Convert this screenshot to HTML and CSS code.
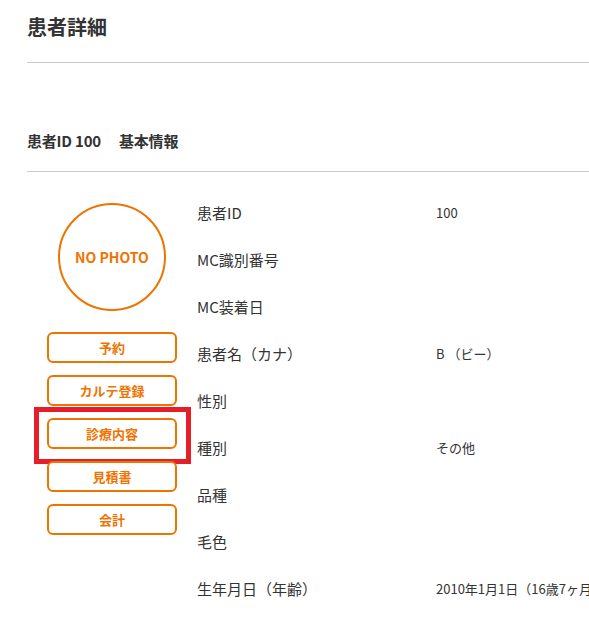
FILE: index.html
```html
<!DOCTYPE html>
<html lang="ja">
<head>
<meta charset="utf-8">
<title>患者詳細</title>
<link rel="stylesheet" href="styles.css">
</head>
<body>
<div class="page">
  <h1 class="title">患者詳細</h1>
  <h2 class="section-head"><span>患者ID 100</span><span>基本情報</span></h2>
  <div class="content">
    <div class="side">
      <div class="photo">NO PHOTO</div>
      <div class="actions">
        <button class="btn">予約</button>
        <button class="btn">カルテ登録</button>
        <button class="btn btn-marked">診療内容</button>
        <button class="btn">見積書</button>
        <button class="btn">会計</button>
      </div>
    </div>
    <dl class="info">
      <div class="row"><dt>患者ID</dt><dd>100</dd></div>
      <div class="row"><dt>MC識別番号</dt><dd></dd></div>
      <div class="row"><dt>MC装着日</dt><dd></dd></div>
      <div class="row"><dt>患者名（カナ）</dt><dd>B （ビー）</dd></div>
      <div class="row"><dt>性別</dt><dd></dd></div>
      <div class="row"><dt>種別</dt><dd>その他</dd></div>
      <div class="row"><dt>品種</dt><dd></dd></div>
      <div class="row"><dt>毛色</dt><dd></dd></div>
      <div class="row"><dt>生年月日（年齢）</dt><dd>2010年1月1日（16歳7ヶ月）</dd></div>
    </dl>
  </div>
</div>
</body>
</html>
```

FILE: styles.css
```css
html, body {
  margin: 0;
  padding: 0;
  background: #fff;
  overflow: hidden;
}
body {
  font-family: "Noto Sans CJK JP", "Noto Sans", sans-serif;
  color: #333;
}
.page {
  padding-left: 27px;
  width: 800px;
}
.title {
  margin: 0;
  padding: 12px 0 20px;
  font-size: 20px;
  line-height: 30px;
  font-weight: bold;
  border-bottom: 1px solid #cccccc;
}
.section-head {
  margin: 66px 0 0;
  padding: 0 0 18px;
  font-size: 15px;
  line-height: 24px;
  font-weight: bold;
  border-bottom: 1px solid #cccccc;
  display: flex;
  gap: 18px;
  letter-spacing: -0.2px;
}
.content {
  display: flex;
  padding-top: 17px;
}
.side {
  width: 170px;
  display: flex;
  flex-direction: column;
  align-items: center;
}
.photo {
  margin-top: 14px;
  width: 104px;
  height: 104px;
  border: 2px solid #ef7300;
  border-radius: 50%;
  display: flex;
  align-items: center;
  justify-content: center;
  color: #ef7300;
  font-weight: bold;
  font-size: 14px;
}
.actions {
  margin-top: 21px;
  display: flex;
  flex-direction: column;
  gap: 12px;
}
.btn {
  position: relative;
  width: 130px;
  height: 31px;
  border: 2px solid #ef7300;
  border-radius: 6px;
  background: #fff;
  color: #ef7300;
  font-family: inherit;
  font-weight: bold;
  font-size: 13px;
  padding: 0;
}
.btn-marked::after {
  content: "";
  position: absolute;
  top: -13px;
  left: -15px;
  right: -16px;
  bottom: -17px;
  border: 5px solid #e61e2a;
  pointer-events: none;
}
.info {
  margin: 0;
  flex: 1;
}
.row {
  display: flex;
  height: 47px;
  align-items: center;
}
.row dt {
  width: 239px;
  font-size: 15px;
}
.row dd {
  margin: 0;
  font-size: 13px;
  white-space: nowrap;
}
```
